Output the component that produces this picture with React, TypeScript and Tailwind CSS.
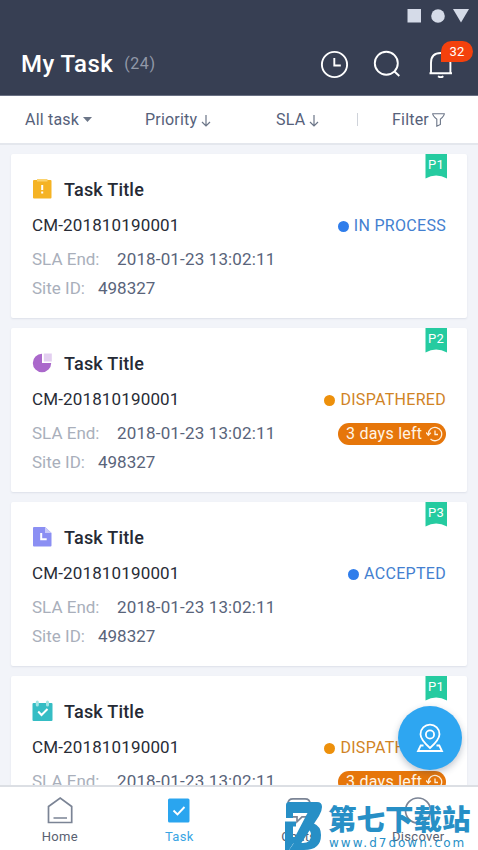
import type { ReactNode } from "react";

type TaskKind = "alert" | "chart" | "document" | "calendar";

type Task = {
  kind: TaskKind;
  priority: string;
  status: string;
  color: "blue" | "orange";
  daysLeft?: number;
};

const tasks: Task[] = [
  { kind: "alert", priority: "P1", status: "IN PROCESS", color: "blue" },
  { kind: "chart", priority: "P2", status: "DISPATHERED", color: "orange", daysLeft: 3 },
  { kind: "document", priority: "P3", status: "ACCEPTED", color: "blue" },
  { kind: "calendar", priority: "P1", status: "DISPATHERED", color: "orange", daysLeft: 3 },
];

function TaskIcon({ kind }: { kind: TaskKind }) {
  if (kind === "alert") {
    return (
      <svg width="21" height="22" viewBox="0 0 21 22">
        <rect x="1" y="2" width="18.5" height="18.5" rx="1" fill="#f5b324" />
        <path d="M5 1h10.500v2.500H5z" fill="#fbd26c" />
        <path d="M10.200 7v5M10.200 13.500v2" stroke="#fff" strokeWidth="2" />
      </svg>
    );
  }

  if (kind === "chart") {
    return (
      <svg width="21" height="22" viewBox="0 0 21 22">
        <path d="M10 1.800A9.200 9.200 0 1 0 19.200 11H10z" fill="#aa68cb" />
        <path d="M11.800 1.500h8v8h-8z" fill="#e3cff0" />
      </svg>
    );
  }

  if (kind === "document") {
    return (
      <svg width="21" height="22" viewBox="0 0 21 22">
        <path d="M1 2q0-1 1-1h11l6.500 6v12.500q0 1-1 1H2q-1 0-1-1z" fill="#8b8ff3" />
        <path d="M13 1l6.500 6H13z" fill="#c9caf9" />
        <path d="M9.200 7v6.200h5.500" stroke="#fff" strokeWidth="2" fill="none" />
      </svg>
    );
  }

  return (
    <svg width="21" height="22" viewBox="0 0 21 22">
      <rect x="0.500" y="3" width="20" height="18" rx="1" fill="#35bdc4" />
      <path d="M5.300 2v3M15.500 2v3" stroke="#a4e5e4" strokeWidth="3" strokeLinecap="round" />
      <path d="M6.200 11.500l3.300 3.500 6-6" stroke="#fff" strokeWidth="2" fill="none" />
    </svg>
  );
}

function Header() {
  return (
    <header className="h-[96px] shrink-0 bg-[#373f53] border-b border-[#697083]">
      <div className="flex h-8 items-center justify-end pr-[9px]">
        <svg width="62" height="16" viewBox="0 0 62 16" fill="#d5dbe8">
          <path d="M0.500 1H14v13.500H0.500z" />
          <circle cx="31" cy="8" r="6.800" />
          <path d="M46 1h16l-8 13.500z" />
        </svg>
      </div>
      <div className="flex h-16 items-center pl-[21px]">
        <h1 className="text-[24px] font-medium tracking-[0.45px] text-white">My Task</h1>
        <span className="ml-[11px] text-[16px] tracking-[0.6px] text-[#9299a8]">(24)</span>
        <div className="relative ml-auto mr-[4px] h-[50px] w-[155px]">
          <svg width="155" height="50" viewBox="0 0 155 50" fill="none" stroke="#fff" strokeWidth="1.900">
            <circle cx="15.500" cy="25.500" r="12.600" />
            <path d="M15.300 19v7.500h6.500" />
            <circle cx="67.300" cy="24.300" r="11.500" />
            <path d="M75.500 32.500l4.800 4.500" />
            <path d="M112 34.200v-10.500q0-9.700 9.700-9.700t9.700 9.700v10.500M110.500 34.200h22.500" />
            <path d="M119 37.200q2.700 2 5.400 0" strokeWidth="1.700" />
          </svg>
          <span className="absolute left-[122px] top-[2px] flex h-[21px] w-[32px] items-center justify-center rounded-full rounded-bl-[2px] bg-[#f4410d] text-[13px] tracking-[0.3px] text-white">
            32
          </span>
        </div>
      </div>
    </header>
  );
}

function DownArrow() {
  return (
    <svg className="ml-[4px] mt-[2px]" width="10" height="12" viewBox="0 0 10 12" fill="none" stroke="#6c7688" strokeWidth="1.200">
      <path d="M5 0v11M1 7l4 4 4-4" />
    </svg>
  );
}

function FilterBar() {
  return (
    <div className="flex h-[49px] shrink-0 items-center border-b-2 border-[#e4e7ed] bg-white text-[16px] tracking-[0.2px] text-[#56617a]">
      <div className="flex w-[120px] items-center pl-[25px]">
        <span className="whitespace-nowrap">All task</span>
        <svg className="ml-[4px] shrink-0" width="9" height="5" viewBox="0 0 9 5" fill="#6c7688">
          <path d="M0 0h9L4.500 5z" />
        </svg>
      </div>
      <div className="flex w-[130px] items-center pl-[25px]">
        Priority
        <DownArrow />
      </div>
      <div className="flex w-[107px] items-center pl-[26px]">
        SLA
        <DownArrow />
      </div>
      <div className="h-[13px] w-px bg-[#cfd3da]" />
      <div className="flex items-center pl-[34px]">
        Filter
        <svg className="ml-[3px] mt-[1px]" width="13" height="14" viewBox="0 0 13 14" fill="none" stroke="#6c7688" strokeWidth="1.100">
          <path d="M0.700 0.700h11.600q0 2-3.900 5.500v5.300l-3.600 1.700v-7Q0.700 2.700 0.700 0.700z" />
        </svg>
      </div>
    </div>
  );
}

function Ribbon({ label }: { label: string }) {
  return (
    <div className="absolute right-[20px] top-0 h-[25px] w-[22px]">
      <svg className="absolute inset-0" width="22" height="25" viewBox="0 0 22 25">
        <path d="M0.500 0H22v24.500q-11-6-21.500 0z" fill="#25cba0" />
      </svg>
      <span className="relative block text-center text-[13px] leading-[22px] tracking-[0.3px] text-white">{label}</span>
    </div>
  );
}

function DaysLeft({ days }: { days: number }) {
  return (
    <span className="flex h-[22px] w-[108px] items-center rounded-full bg-[#e6760a] pl-[8px] text-[16px] tracking-[0.25px] text-[#fff4e5]">
      {days} days left
      <svg className="ml-auto mr-[3px]" width="17" height="16" viewBox="0 0 17 16" fill="none" stroke="#fff0dc" strokeWidth="1.300">
        <path d="M2.300 8a6.700 6.700 0 1 1 2.200 5M0 6.500L2.300 9.300 4.800 6.700M9 4.500v4h3" />
      </svg>
    </span>
  );
}

function TaskCard({ task }: { task: Task }) {
  const isBlue = task.color === "blue";

  return (
    <article className="relative h-[164px] shrink-0 rounded-[2px] bg-white pl-[21px] pr-[21px] pt-[20px] shadow-[0_1px_2px_rgba(40,60,100,0.1)]">
      <Ribbon label={task.priority} />
      <div className="flex h-[30px] items-center">
        <TaskIcon kind={task.kind} />
        <h2 className="ml-[11px] text-[18px] font-medium tracking-[0.2px] text-[#252a35]">Task Title</h2>
      </div>
      <div className="flex h-[44px] items-center justify-between">
        <span className="text-[17px] tracking-[0.15px] text-[#282c36]">CM-201810190001</span>
        <span className={isBlue ? "flex items-center text-[#437fd0]" : "flex items-center text-[#d08325]"}>
          <i className={isBlue ? "mr-[5px] size-[11px] rounded-full bg-[#2f7deb]" : "mr-[5px] size-[11px] rounded-full bg-[#ed900b]"} />
          <span className="text-[16px] tracking-[0.3px]">{task.status}</span>
        </span>
      </div>
      <div className="flex h-[24px] items-center text-[17px] text-[#59647a]">
        <span className="w-[85px] text-[#a9afbb]">SLA End:</span>
        <span className="tracking-[0.15px]">2018-01-23 13:02:11</span>
        {task.daysLeft ? (
          <div className="ml-auto">
            <DaysLeft days={task.daysLeft} />
          </div>
        ) : null}
      </div>
      <div className="flex h-[34px] items-center text-[17px] text-[#59647a]">
        <span className="w-[66px] text-[#a9afbb]">Site ID:</span>
        <span>498327</span>
      </div>
    </article>
  );
}

function NavItem({ label, active = false, children }: { label: string; active?: boolean; children: ReactNode }) {
  return (
    <div className="flex flex-1 flex-col items-center pt-[9px]">
      <svg width="28" height="30" viewBox="0 0 28 30" fill="none" stroke="#7b8495" strokeWidth="1.700">
        {children}
      </svg>
      <span className={active ? "mt-[1px] text-[13px] leading-[20px] tracking-[0.3px] text-[#39a5e3]" : "mt-[1px] text-[13px] leading-[20px] tracking-[0.3px] text-[#596171]"}>
        {label}
      </span>
    </div>
  );
}

function BottomNav() {
  return (
    <nav className="flex h-[65px] shrink-0 border-t-2 border-[#dcdfe4] bg-white">
      <NavItem label="Home">
        <path d="M2.500 26.500V10.500L14.200 2l11.500 8.500v16zM7.500 22h13.500" />
      </NavItem>
      <NavItem label="Task" active>
        <rect x="3" y="2.500" width="21.500" height="24" rx="1.500" fill="#2aa5ef" stroke="none" />
        <path d="M8.500 14.500l4 4 7-7.500" stroke="#fff" strokeWidth="1.900" />
      </NavItem>
      <NavItem label="Chats">
        <path d="M8 2.800h12q5 0 5 5v8q0 5-5 5h-3l-5 5v-5H8q-5 0-5-5v-8q0-5 5-5z" />
      </NavItem>
      <NavItem label="Discover">
        <circle cx="14" cy="14.500" r="12.500" />
      </NavItem>
    </nav>
  );
}

function MapButton() {
  return (
    <button className="absolute left-[398px] top-[706px] flex size-[64px] items-center justify-center rounded-full bg-[#2ea6f1] shadow-[0_3px_7px_rgba(40,60,90,0.3)]">
      <svg width="28" height="30" viewBox="0 0 28 30" fill="none" stroke="#fff" strokeWidth="1.800">
        <path d="M14 25Q4.500 16.500 4.500 11.200a9.500 9.500 0 0 1 19 0Q23.500 16.500 14 25z" />
        <circle cx="14" cy="11.500" r="4.100" />
        <path d="M7.500 22.500H4.700L2 28h24l-2.700-5.500h-2.800" />
      </svg>
    </button>
  );
}

function SiteMark() {
  return (
    <div className="pointer-events-none absolute left-[284px] top-[800px] flex h-[50px] text-[#278fc6]">
      <svg className="shrink-0" width="42" height="50" viewBox="0 0 42 50" fill="currentColor">
        <path d="M5 2h28q5 0 5 5 0 4-3 9L17 43.500H7.500L23.500 13H9v5H2V5q0-3 3-3z" />
        <path d="M1 21.500h11v5H9V37h4.500L5 50H1z" />
        <path d="M29 23q8 3 8 12 0 15-17 15H5l5-7h9q8 0 8-8 0-4-2.500-5.500z" />
      </svg>
      <div className="ml-[2px] w-[150px] whitespace-nowrap">
        <div className="h-[36px] font-['Noto_Sans_CJK_SC',sans-serif] text-[28.500px] font-black leading-[36px]">第七下载站</div>
        <div className="ml-[1px] font-['DejaVu_Sans',sans-serif] text-[12px] leading-[14px] tracking-[2px]">www.d7down.com</div>
      </div>
    </div>
  );
}

export default function App() {
  return (
    <div className="relative flex h-[850px] w-[478px] flex-col overflow-hidden bg-[#f2f4f9] font-[Roboto,sans-serif]">
      <Header />
      <FilterBar />
      <main className="flex min-h-0 flex-1 flex-col gap-[10px] overflow-hidden px-[11px] pt-[9px]">
        {tasks.map((task, index) => (
          <TaskCard key={index} task={task} />
        ))}
      </main>
      <BottomNav />
      <MapButton />
      <SiteMark />
    </div>
  );
}
